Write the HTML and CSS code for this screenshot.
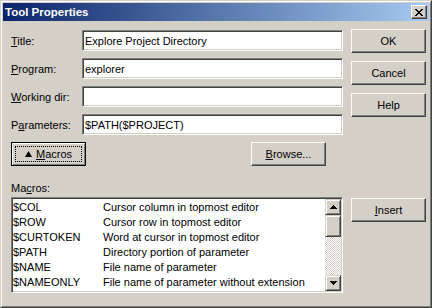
FILE: index.html
```html
<!DOCTYPE html>
<html lang="en">

<head>
    <meta charset="UTF-8">
    <title>Tool Properties</title>
    <link rel="stylesheet" href="styles.css">
</head>

<body>

    <!-- dialog window -->
    <div class="window">
        <div class="frame">

            <div class="titlebar">
                <span class="title">Tool Properties</span>
                <button class="close">
                    <svg width="8" height="7" viewBox="0 0 8 7" shape-rendering="crispEdges">
                        <path d="M0 0h2v1h-2zM6 0h2v1h-2zM1 1h2v1h-2zM5 1h2v1h-2zM2 2h4v1h-4zM3 3h2v1h-2zM2 4h4v1h-4zM1 5h2v1h-2zM5 5h2v1h-2zM0 6h2v1h-2zM6 6h2v1h-2z" fill="#000"/>
                    </svg>
                </button>
            </div>

            <div class="client">

                <div class="top">
                    <div class="form">
                        <div class="row">
                            <label class="label"><u>T</u>itle:</label>
                            <input class="field" type="text" value="Explore Project Directory" readonly>
                        </div>
                        <div class="row">
                            <label class="label"><u>P</u>rogram:</label>
                            <input class="field" type="text" value="explorer" readonly>
                        </div>
                        <div class="row">
                            <label class="label"><u>W</u>orking dir:</label>
                            <input class="field" type="text" value="" readonly>
                        </div>
                        <div class="row">
                            <label class="label">P<u>a</u>rameters:</label>
                            <input class="field" type="text" value="$PATH($PROJECT)" readonly>
                        </div>
                        <div class="tools">
                            <button class="btn btn-default">
                                <svg width="7" height="6" viewBox="0 0 7 6">
                                    <polygon points="3.5,0 7,6 0,6" fill="#000"/>
                                </svg>
                                <span><u>M</u>acros</span>
                            </button>
                            <button class="btn browse"><u>B</u>rowse...</button>
                        </div>
                    </div>

                    <div class="side">
                        <button class="btn">OK</button>
                        <button class="btn">Cancel</button>
                        <button class="btn">Help</button>
                    </div>
                </div>

                <div class="macros-label">Ma<u>c</u>ros:</div>

                <div class="bottom">
                    <div class="list">
                        <div class="items">
                            <div class="item"><span class="name">$COL</span><span>Cursor column in topmost editor</span></div>
                            <div class="item"><span class="name">$ROW</span><span>Cursor row in topmost editor</span></div>
                            <div class="item"><span class="name">$CURTOKEN</span><span>Word at cursor in topmost editor</span></div>
                            <div class="item"><span class="name">$PATH</span><span>Directory portion of parameter</span></div>
                            <div class="item"><span class="name">$NAME</span><span>File name of parameter</span></div>
                            <div class="item"><span class="name">$NAMEONLY</span><span>File name of parameter without extension</span></div>
                        </div>
                        <div class="scrollbar">
                            <div class="sb-btn">
                                <svg width="7" height="4" viewBox="0 0 7 4" shape-rendering="crispEdges">
                                    <path d="M3 0h1v1h-1zM2 1h3v1h-3zM1 2h5v1h-5zM0 3h7v1h-7z" fill="#000"/>
                                </svg>
                            </div>
                            <div class="sb-btn thumb"></div>
                            <div class="track"></div>
                            <div class="sb-btn">
                                <svg width="7" height="4" viewBox="0 0 7 4" shape-rendering="crispEdges">
                                    <path d="M0 0h7v1h-7zM1 1h5v1h-5zM2 2h3v1h-3zM3 3h1v1h-1z" fill="#000"/>
                                </svg>
                            </div>
                        </div>
                    </div>
                    <button class="btn insert"><u>I</u>nsert</button>
                </div>

            </div>
        </div>
    </div>

</body>

</html>
```

FILE: styles.css
```css
* {
    margin: 0;
    padding: 0;
    box-sizing: border-box;
}

body {
    font-family: "Liberation Sans", Arial, sans-serif;
    font-size: 11px;
    color: #000;
    background-color: #d4d0c8;
}

/* window borders */
.window {
    width: 432px;
    height: 308px;
    border: 1px solid;
    border-color: #d4d0c8 #404040 #404040 #d4d0c8;
}

.frame {
    height: 100%;
    border: 1px solid;
    border-color: #fff #808080 #808080 #fff;
    padding: 1px;
    background-color: #d4d0c8;
}

/* title bar */
.titlebar {
    height: 18px;
    display: flex;
    align-items: center;
    padding-left: 2px;
    background: linear-gradient(to right, #0a246a, #a6caf0);
}

.title {
    color: #fff;
    font-weight: bold;
    font-size: 11.5px;
}

.close {
    margin-left: auto;
    margin-right: 2px;
    width: 16px;
    height: 14px;
    display: flex;
    align-items: center;
    justify-content: center;
    background-color: #d4d0c8;
    border: 1px solid;
    border-color: #fff #404040 #404040 #fff;
    box-shadow: inset -1px -1px #808080;
}

.close svg {
    display: block;
}

/* client area */
.client {
    padding: 8px 3px 0 8px;
}

.top {
    display: flex;
}

.form {
    width: 332px;
    padding-top: 1px;
    display: flex;
    flex-direction: column;
    gap: 7px;
}

.row {
    display: flex;
    align-items: center;
    height: 21px;
}

.label {
    width: 71px;
}

.field {
    width: 261px;
    height: 21px;
    font: inherit;
    color: #000;
    padding: 0 2px;
    background-color: #fff;
    border: 1px solid;
    border-color: #808080 #fff #fff #808080;
    box-shadow: inset 1px 1px #404040, inset -1px -1px #d4d0c8;
    outline: none;
}

/* buttons */
.btn {
    width: 75px;
    height: 24px;
    font: inherit;
    color: #000;
    background-color: #d4d0c8;
    border: 1px solid;
    border-color: #fff #404040 #404040 #fff;
    box-shadow: inset -1px -1px #808080;
}

.btn-default {
    display: flex;
    align-items: center;
    justify-content: center;
    gap: 4px;
    border-color: #000;
    box-shadow: inset 1px 1px #fff, inset -1px -1px #808080;
    outline: 1px dotted #000;
    outline-offset: -5px;
}

.btn-default svg {
    display: block;
}

.tools {
    display: flex;
}

.browse {
    margin-left: 165px;
}

.side {
    margin-left: 8px;
    display: flex;
    flex-direction: column;
    gap: 8px;
}

/* macro list */
.macros-label {
    margin-top: 16px;
    line-height: 13px;
}

.bottom {
    margin-top: 2px;
    display: flex;
    align-items: flex-start;
}

.insert {
    margin-left: 8px;
    margin-top: 1px;
}

.list {
    width: 332px;
    height: 96px;
    display: flex;
    padding: 1px;
    background-color: #fff;
    border: 1px solid;
    border-color: #808080 #fff #fff #808080;
    box-shadow: inset 1px 1px #404040, inset -1px -1px #d4d0c8;
}

.items {
    flex: 1;
    padding-top: 1px;
    overflow: hidden;
}

.item {
    display: flex;
    height: 15px;
    line-height: 15px;
    white-space: nowrap;
}

.item .name {
    width: 90px;
    flex-shrink: 0;
}

.scrollbar {
    width: 16px;
    display: flex;
    flex-direction: column;
}

.sb-btn {
    height: 16px;
    display: flex;
    align-items: center;
    justify-content: center;
    background-color: #d4d0c8;
    border: 1px solid;
    border-color: #d4d0c8 #404040 #404040 #d4d0c8;
    box-shadow: inset 1px 1px #fff, inset -1px -1px #808080;
}

.sb-btn svg {
    display: block;
}

.thumb {
    height: 22px;
}

.track {
    flex: 1;
    background: repeating-conic-gradient(#fff 0 25%, #d4d0c8 0 50%) 0 0 / 2px 2px;
}
```
